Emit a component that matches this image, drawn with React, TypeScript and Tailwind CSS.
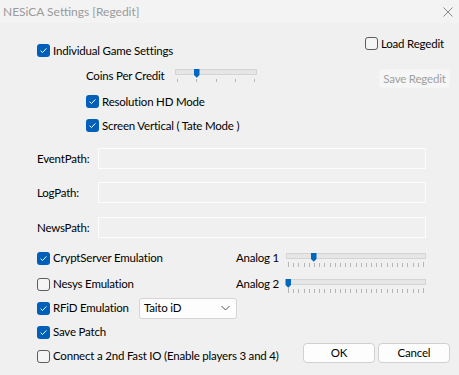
import React from "react";

function Check({ checked }: { checked: boolean }) {
  return checked ? (
    <span className="w-[13px] h-[13px] rounded-[3px] bg-[#005fb8] flex items-center justify-center shrink-0">
      <svg width="9" height="9" viewBox="0 0 9 9">
        <path d="M1.6 4.7 L3.5 6.5 L7.4 2.4" stroke="white" strokeWidth="1" fill="none" />
      </svg>
    </span>
  ) : (
    <span className="w-[13px] h-[13px] rounded-[3px] border border-[#5d5d5d] bg-[#f5f5f5] shrink-0" />
  );
}

function CheckRow({ checked, label, className = "" }: { checked: boolean; label: string; className?: string }) {
  return (
    <div className={"flex items-center gap-[3px] " + className}>
      <Check checked={checked} />
      <span className="leading-[14px] whitespace-nowrap">{label}</span>
    </div>
  );
}

function Thumb({ x, y }: { x: number; y: number }) {
  return <path d={`M${x} ${y} h5.5 v6 l-2.75 2.75 l-2.75 -2.75 z`} fill="#0067c0" />;
}

function CoinsSlider() {
  const ticks = [3, 22, 42, 61, 80];
  return (
    <svg width="84" height="18" viewBox="0 0 84 18" className="shrink-0">
      <rect x="1.5" y="3.5" width="81" height="5" fill="#e6e6e6" stroke="#d4d4d4" />
      {ticks.map((t) => (
        <line key={t} x1={t + 0.5} x2={t + 0.5} y1="13" y2="16" stroke="#b5b5b5" />
      ))}
      <Thumb x={20} y={3} />
    </svg>
  );
}

function AnalogSlider({ pos }: { pos: number }) {
  const ticks = Array.from({ length: 27 }, (_, i) => Math.round(3 + (i * 135) / 26));
  return (
    <svg width="142" height="24" viewBox="0 0 142 24" className="shrink-0">
      <rect x="1.5" y="7.5" width="139" height="5" fill="#e6e6e6" stroke="#d4d4d4" />
      {ticks.map((t, i) => (
        <line
          key={i}
          x1={t + 0.5}
          x2={t + 0.5}
          y1={i === 0 || i === 26 ? 16 : 17}
          y2="21"
          stroke="#b5b5b5"
        />
      ))}
      <Thumb x={pos} y={7} />
    </svg>
  );
}

function Field({ label, className = "" }: { label: string; className?: string }) {
  return (
    <div className={"flex items-center h-[21px] " + className}>
      <span className="w-[61px] leading-[14px]">{label}</span>
      <div className="w-[328px] h-[21px] border border-[#fcfcfc] bg-[#f0f0f0]" />
    </div>
  );
}

export default function App() {
  return (
    <div className="w-[459px] h-[375px] bg-[#f0f0f0] font-['Lato',sans-serif] text-[11.5px] tracking-[-0.2px] text-black flex flex-col overflow-hidden">
      <div className="h-[23px] bg-[#f3f3f3] flex items-center justify-between pl-[3px] pr-[6px] shrink-0">
        <span className="text-[#9a9a9a] text-[12px] tracking-normal leading-[14px]">NESiCA Settings [Regedit]</span>
        <svg width="10" height="10" viewBox="0 0 10 10">
          <path d="M0.5 0.5 L9.5 9.5 M9.5 0.5 L0.5 9.5" stroke="#8a8a8a" strokeWidth="1" />
        </svg>
      </div>
      <div className="flex-1 pl-[37px] flex flex-col">
        <div className="flex">
          <div className="flex-1 flex flex-col pt-[21px]">
            <CheckRow checked label="Individual Game Settings" className="h-[13px]" />
            <div className="flex mt-[9px] h-[18px] pl-[49px]">
              <span className="mt-[2px] leading-[16px] w-[88px] whitespace-nowrap">Coins Per Credit</span>
              <CoinsSlider />
            </div>
            <CheckRow checked label="Resolution HD Mode" className="h-[13px] mt-[11px] ml-[49px]" />
            <CheckRow checked label="Screen Vertical ( Tate Mode )" className="h-[13px] mt-[11px] ml-[49px]" />
          </div>
          <div className="w-[94px] pr-[9px] pt-[14px] flex flex-col">
            <CheckRow checked={false} label="Load Regedit" className="h-[13px]" />
            <button className="self-end mt-[19px] w-[71px] h-[19px] rounded-[3px] bg-[#f6f6f6] border border-[#f4f4f4] text-[#a0a0a0] leading-[14px]">
              Save Regedit
            </button>
          </div>
        </div>

        <div className="flex flex-col mt-[16px]">
          <Field label="EventPath:" />
          <Field label="LogPath:" className="mt-[13px]" />
          <Field label="NewsPath:" className="mt-[14px]" />
        </div>

        <div className="flex flex-col mt-[8px]">
          <div className="flex items-center h-[24px]">
            <CheckRow checked label="CryptServer Emulation" className="w-[199px]" />
            <span className="w-[49px] leading-[14px] whitespace-nowrap">Analog 1</span>
            <AnalogSlider pos={26} />
          </div>
          <div className="flex items-center h-[24px] mt-[2px]">
            <CheckRow checked={false} label="Nesys Emulation" className="w-[199px]" />
            <span className="w-[49px] leading-[14px] whitespace-nowrap">Analog 2</span>
            <AnalogSlider pos={0.5} />
          </div>
          <div className="flex items-center h-[24px]">
            <CheckRow checked label="RFiD Emulation" className="w-[102px]" />
            <div className="w-[98px] h-[21px] bg-[#fdfdfd] border border-[#d5d5d5] rounded-[3px] flex items-center justify-between pl-[4px] pr-[6px]">
              <span className="leading-[14px]">Taito iD</span>
              <svg width="9" height="6" viewBox="0 0 9 6">
                <path d="M0.5 1 L4.5 5 L8.5 1" stroke="#555" strokeWidth="1" fill="none" />
              </svg>
            </div>
          </div>
          <CheckRow checked label="Save Patch" className="h-[24px]" />
          <div className="flex items-center h-[24px]">
            <CheckRow checked={false} label="Connect a 2nd Fast IO (Enable players 3 and 4)" className="w-[266px]" />
            <div className="flex gap-[3px] -mt-[6px]">
              <button className="w-[72px] h-[20px] rounded-[4px] bg-[#fdfdfd] border border-[#d0d0d0] leading-[14px]">
                OK
              </button>
              <button className="w-[72px] h-[20px] rounded-[4px] bg-[#fdfdfd] border border-[#d0d0d0] leading-[14px]">
                Cancel
              </button>
            </div>
          </div>
        </div>
      </div>
    </div>
  );
}
